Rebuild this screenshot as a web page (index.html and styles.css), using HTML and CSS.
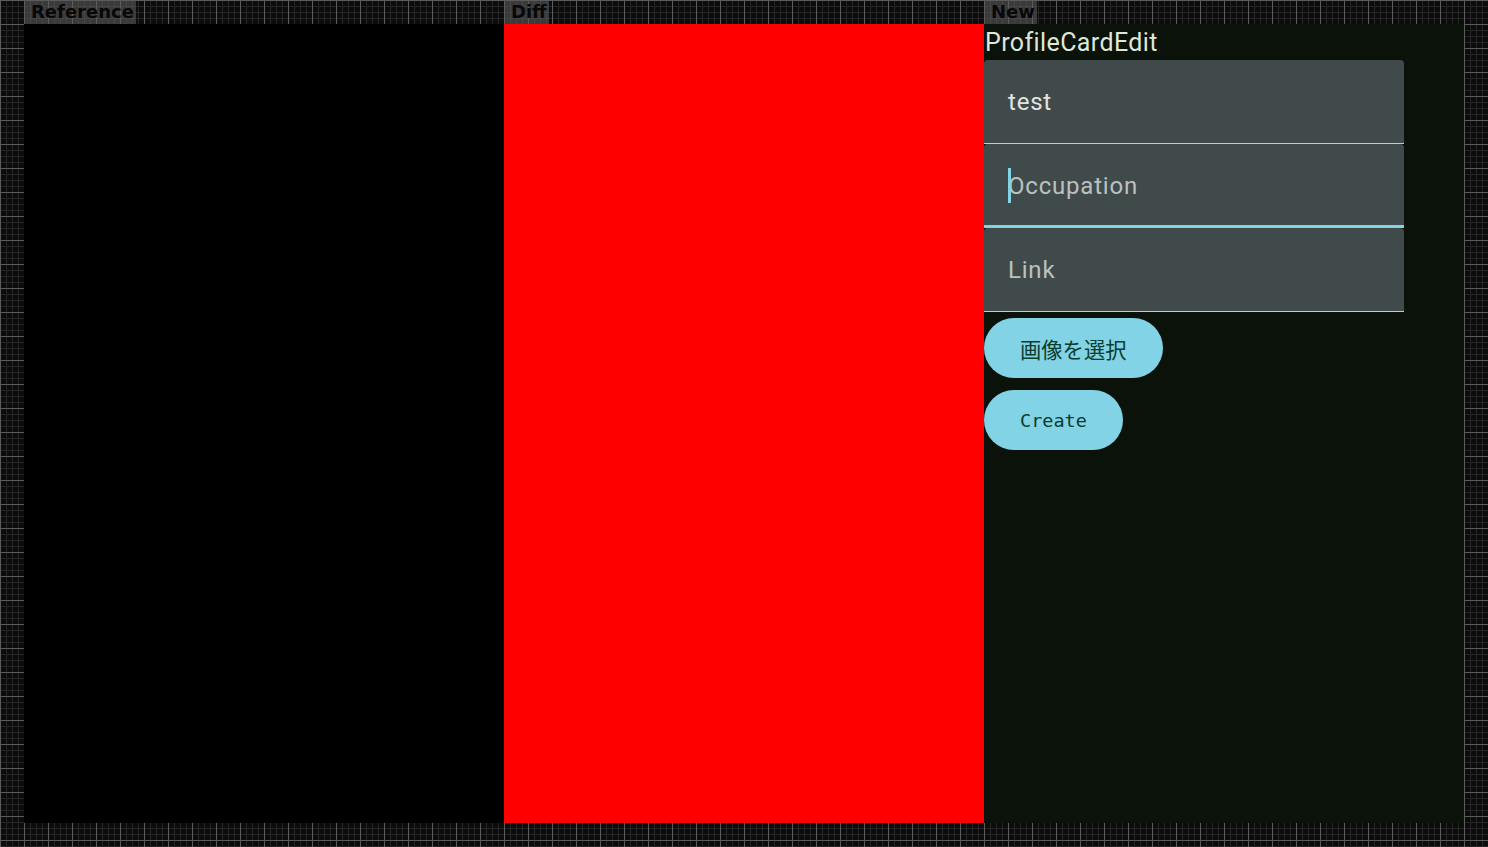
FILE: index.html
```html
<!DOCTYPE html>
<html lang="ja">
<head>
<meta charset="utf-8">
<title>ProfileCardEdit</title>
<link rel="stylesheet" href="styles.css">
</head>
<body>
<div class="board">
  <section class="col">
    <div class="tag"><span class="tag-box">Reference</span></div>
    <div class="panel panel-ref"></div>
  </section>
  <section class="col">
    <div class="tag"><span class="tag-box">Diff</span></div>
    <div class="panel panel-diff"></div>
  </section>
  <section class="col">
    <div class="tag"><span class="tag-box">New</span></div>
    <div class="panel panel-new">
      <h1 class="title">ProfileCardEdit</h1>
      <div class="fields">
        <div class="field"><span class="value">test</span></div>
        <div class="field field-focus"><span class="caret"></span><span class="placeholder">Occupation</span></div>
        <div class="field"><span class="placeholder">Link</span></div>
      </div>
      <div class="actions">
        <button class="btn btn-jp">画像を選択</button>
        <button class="btn btn-en">Create</button>
      </div>
    </div>
  </section>
</div>
</body>
</html>
```
FILE: styles.css
```css
html, body {
  margin: 0;
  padding: 0;
}
body {
  width: 1488px;
  height: 847px;
  overflow: hidden;
  background-color: #0c0c0c;
  background-image:
    linear-gradient(to right, #5c5c5c 1px, transparent 1px),
    linear-gradient(to bottom, #5c5c5c 1px, transparent 1px),
    linear-gradient(to right, #262626 1px, transparent 1px),
    linear-gradient(to bottom, #262626 1px, transparent 1px);
  background-size: 24px 24px, 24px 24px, 6px 6px, 6px 6px;
  font-family: Roboto, "Noto Sans CJK JP", sans-serif;
}
.board {
  display: flex;
  padding: 0 24px;
}
.col {
  width: 480px;
  display: flex;
  flex-direction: column;
}
.tag {
  height: 24px;
  display: flex;
}
.tag-box {
  background: rgba(90, 90, 90, 0.6);
  color: #080808;
  font-family: "DejaVu Sans", sans-serif;
  font-weight: bold;
  font-size: 18px;
  line-height: 24px;
  padding: 0 2px 0 7px;
}
.panel {
  height: 799px;
}
.panel-ref { background: #000; }
.panel-diff { background: #ff0000; }
.panel-new {
  background: #0a1209;
  display: flex;
  flex-direction: column;
  align-items: flex-start;
}
.title {
  margin: 0;
  height: 35px;
  padding-top: 1px;
  font-weight: 400;
  font-size: 25px;
  letter-spacing: 0.4px;
  line-height: 36px;
  color: #dfe6da;
  padding-left: 1px;
}
.fields {
  display: flex;
  flex-direction: column;
  width: 420px;
}
.field {
  position: relative;
  height: 83px;
  background: #414a4b;
  border-radius: 4px 4px 0 0;
  border-bottom: 1px solid #c4c8c8;
  display: flex;
  align-items: center;
  padding-left: 24px;
  font-size: 24px;
  letter-spacing: 0.8px;
}
.field-focus {
  height: 81px;
  padding-top: 2px;
  box-sizing: content-box;
  border-bottom: 3px solid #82d3e6;
}
.field-focus {
  height: 79px;
}
.value { color: #e1e3e3; }
.placeholder { color: #b9c1c1; }
.caret {
  position: absolute;
  left: 24px;
  top: 24px;
  width: 3px;
  height: 35px;
  background: #82d3e6;
}
.actions {
  display: flex;
  flex-direction: column;
  align-items: flex-start;
  gap: 12px;
  margin-top: 6px;
}
.btn {
  height: 60px;
  border: 0;
  border-radius: 30px;
  background: #82d3e6;
  color: #0b3d2c;
  padding: 0 36px;
  font-family: "DejaVu Sans Mono", "Noto Sans CJK JP", monospace;
}
.btn-jp { font-size: 21.3px; }
.btn-en { font-size: 18.5px; }
```
